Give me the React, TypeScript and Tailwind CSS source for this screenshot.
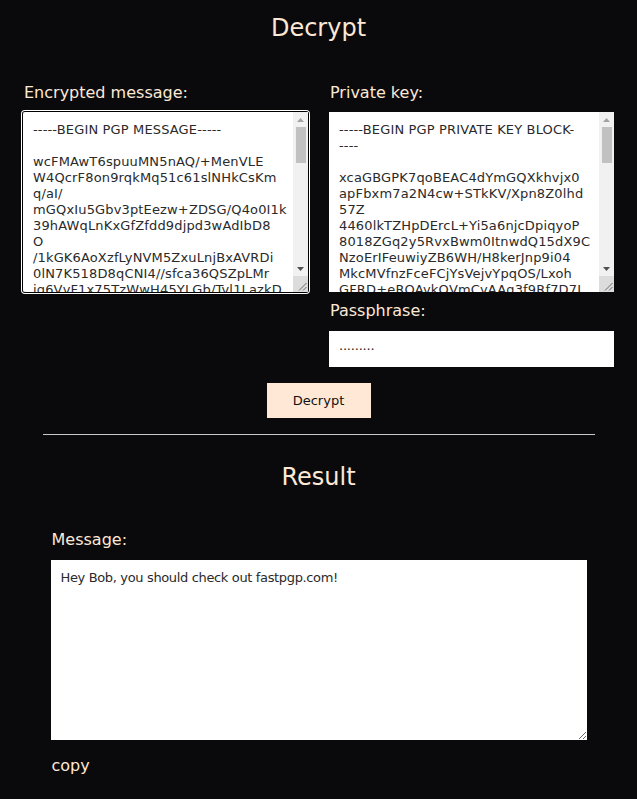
import { useState } from 'react';

const FONT = '[font-family:"DejaVu_Sans",sans-serif]';

const encrypted = [
    '-----BEGIN PGP MESSAGE-----',
    '',
    'wcFMAwT6spuuMN5nAQ/+MenVLE',
    'W4QcrF8on9rqkMq51c61slNHkCsKm',
    'q/aI/',
    'mGQxIu5Gbv3ptEezw+ZDSG/Q4o0I1k',
    '39hAWqLnKxGfZfdd9djpd3wAdIbD8',
    'O',
    '/1kGK6AoXzfLyNVM5ZxuLnjBxAVRDi',
    '0lN7K518D8qCNI4//sfca36QSZpLMr',
    'jg6VvF1x75TzWwH45YLGb/Tyl1LazkD',
    'n2Pq8sYtR0aLkQwE3vXbZ9mHfUc4oJ',
    '=Xk2a',
    '-----END PGP MESSAGE-----',
].join('\n');

const privateKey = [
    '-----BEGIN PGP PRIVATE KEY BLOCK-',
    '----',
    '',
    'xcaGBGPK7qoBEAC4dYmGQXkhvjx0',
    'apFbxm7a2N4cw+STkKV/Xpn8Z0lhd',
    '57Z',
    '4460lkTZHpDErcL+Yi5a6njcDpiqyoP',
    '8018ZGq2y5RvxBwm0ItnwdQ15dX9C',
    'NzoErIFeuwiyZB6WH/H8kerJnp9i04',
    'MkcMVfnzFceFCjYsVejvYpqOS/Lxoh',
    'GFRD+eROAvkQVmCyAAg3f9Rf7D7I',
    'qLw2bV8sTn4ZxPe1yUo9RcAm5KdHf',
    '-----END PGP PRIVATE KEY BLOCK-----',
].join('\n');

// classic scrollbar drawn over the textarea (headless chrome hides the real one)
function FakeScrollbar() {
    return (
        <div className="absolute right-0 top-0 bottom-0 w-[15px] bg-[#f1f1f1] flex flex-col pointer-events-none">
            <div className="h-[15px] flex items-center justify-center">
                <svg width="7" height="4" viewBox="0 0 7 4"><polygon points="3.5,0 7,4 0,4" fill="#a3a3a3" /></svg>
            </div>
            <div className="ml-[3px] mr-[2px] h-[36px] bg-[#c1c1c1]" />
            <div className="flex-1" />
            <div className="h-[15px] flex items-center justify-center">
                <svg width="7" height="4" viewBox="0 0 7 4"><polygon points="0,0 7,0 3.5,4" fill="#505050" /></svg>
            </div>
            <div className="h-[16px] bg-[#dcdcdc] flex items-end justify-end">
                <svg width="15" height="15" viewBox="0 0 15 15">
                    <line x1="13.5" y1="6" x2="6" y2="13.5" stroke="#6b6b6b" strokeWidth="1" />
                    <line x1="13.5" y1="10" x2="10" y2="13.5" stroke="#6b6b6b" strokeWidth="1" />
                </svg>
            </div>
        </div>
    );
}

export default function App() {
    const [message, setMessage] = useState(encrypted);
    const [key, setKey] = useState(privateKey);
    const [pass, setPass] = useState('·········');

    return (
        <div className={`min-h-[799px] bg-[#0a0a0c] text-[#fde8d6] ${FONT} flex flex-col items-center pt-[12px] pb-[20px]`}>
            <h1 className="text-[24px] leading-[32px] font-normal">Decrypt</h1>

            <div className="w-[591px] grid grid-cols-2 gap-x-[21px] items-start mt-[37px]">
                <div className="flex flex-col">
                    <label className="text-[16px] leading-[24px] pl-[1px]">Encrypted message:</label>
                    <div className="relative mt-[7px] h-[180px] rounded-[2px] shadow-[0_0_0_1px_#000,0_0_0_2px_#fff]">
                        <textarea
                            autoFocus
                            value={message}
                            onChange={(e) => setMessage(e.target.value)}
                            className="block h-full w-full bg-white text-[#2a2a2a] text-[13px] leading-[16px] tracking-[0.15px] p-[10px] pr-[18px] resize-none whitespace-pre overflow-hidden rounded-[2px] outline-none"
                        />
                        <FakeScrollbar />
                    </div>
                </div>
                <div className="flex flex-col">
                    <label className="text-[16px] leading-[24px] pl-[1px]">Private key:</label>
                    <div className="relative mt-[7px] h-[180px]">
                        <textarea
                            value={key}
                            onChange={(e) => setKey(e.target.value)}
                            className="block h-full w-full bg-white text-[#2a2a2a] text-[13px] leading-[16px] tracking-[0.15px] p-[10px] pr-[18px] resize-none whitespace-pre overflow-hidden outline-none"
                        />
                        <FakeScrollbar />
                    </div>
                    <label className="mt-[7px] text-[16px] leading-[24px] pl-[1px]">Passphrase:</label>
                    <input
                        value={pass}
                        onChange={(e) => setPass(e.target.value)}
                        className="mt-[8px] h-[36px] w-full bg-white text-[#222] text-[13px] px-[10px] outline-none tracking-[-0.2px]"
                    />
                </div>
            </div>

            <button className="mt-[16px] w-[104px] h-[35px] bg-[#ffe8d6] text-[#111] text-[13px] font-medium">
                Decrypt
            </button>

            <hr className="mt-[16px] w-[552px] border-0 h-px bg-[#c8c8c8]" />

            <h2 className="mt-[26px] text-[24px] leading-[32px] font-normal">Result</h2>

            <div className="w-[536px] flex flex-col mt-[35px]">
                <label className="text-[16px] leading-[24px] pl-[1px]">Message:</label>
                <textarea
                    readOnly
                    value="Hey Bob, you should check out fastpgp.com!"
                    className="mt-[8px] h-[180px] w-full bg-white text-[#2a2a2a] text-[13px] leading-[16px] tracking-[-0.35px] p-[10px] resize-y outline-none"
                />
                <button className="mt-[14px] self-start text-[16px] leading-[24px] pl-[1px]">copy</button>
            </div>
        </div>
    );
}
